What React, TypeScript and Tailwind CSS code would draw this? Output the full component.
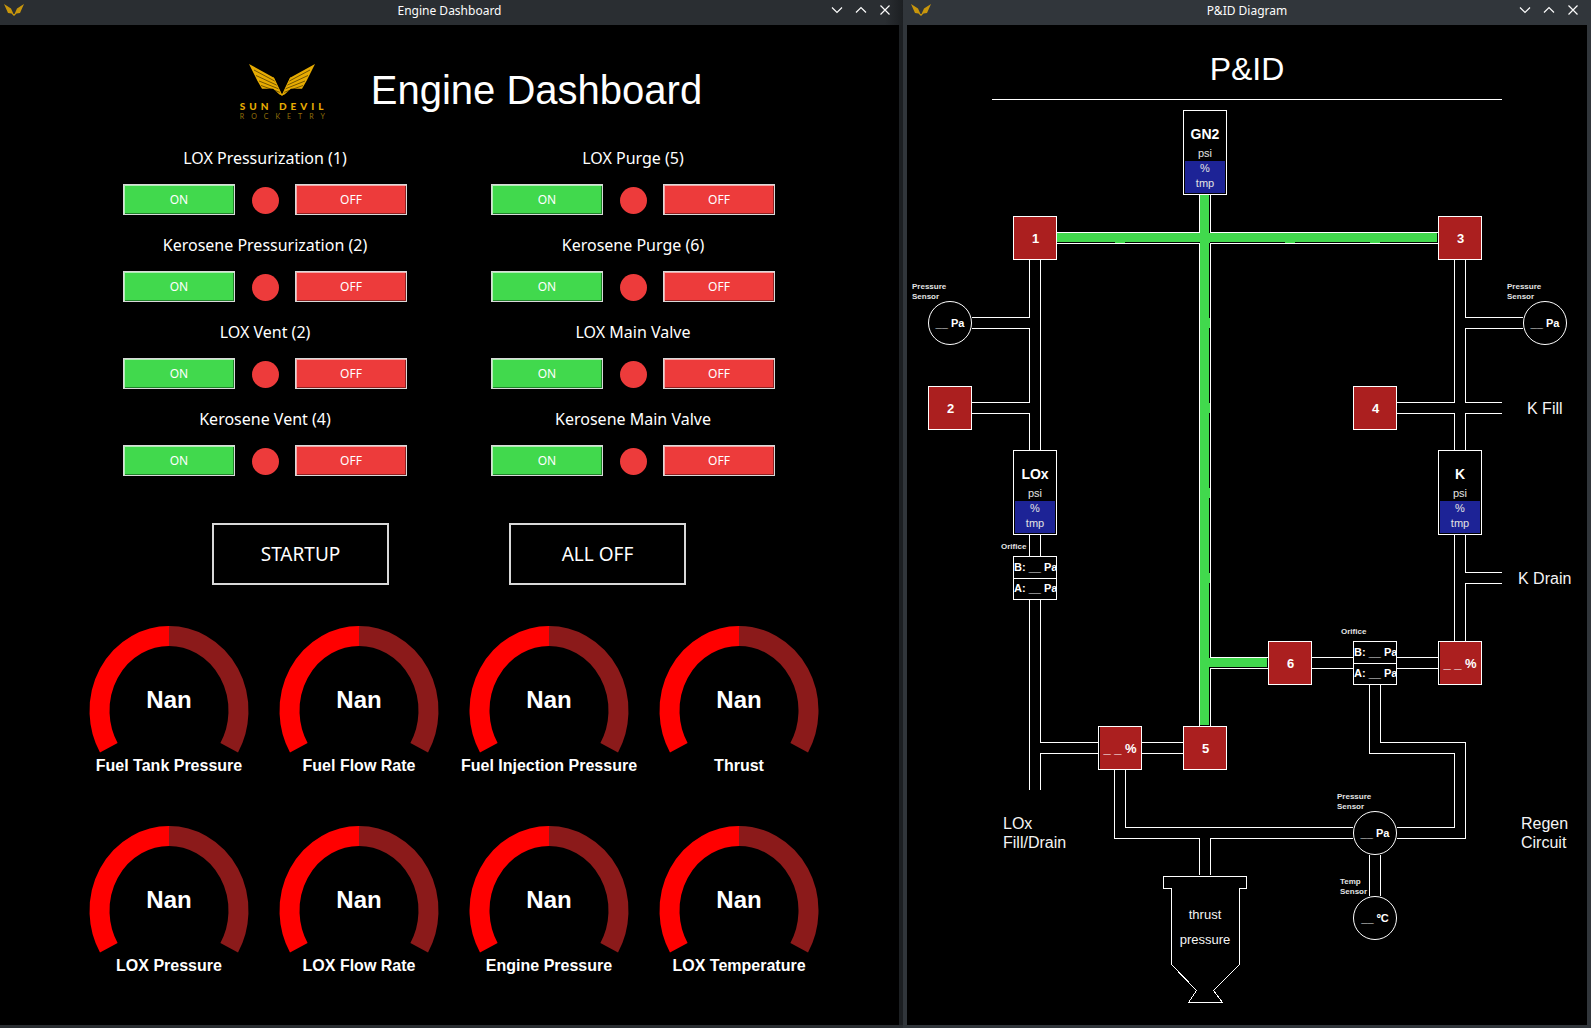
import { useId, type CSSProperties, type ReactNode } from "react";

/* ---------- Branding ---------- */

function Wing() {
  return (
    <>
      <path d="M0 0 L24.5 13.5 L33 31.5 L30.5 30.5 L24 24.8 L13 24.8 L8.5 17 Z" fill="currentColor" />
      <path
        d="M5 6 L27.5 18 M7 11.5 L28.5 21.5 M10 17 L30 25 M12 21.5 L31.5 28.5"
        stroke="#000"
        strokeWidth="0.5"
        fill="none"
      />
      <path d="M24.5 13.5 L33 31.5" stroke="currentColor" strokeWidth="1" />
    </>
  );
}

function Wings({ className }: { className: string }) {
  return (
    <svg viewBox="0 0 66 32" className={className} aria-hidden="true">
      <Wing />
      <g transform="translate(66 0) scale(-1 1)">
        <Wing />
      </g>
    </svg>
  );
}

function WingsMark() {
  return (
    <svg viewBox="0 0 20 12" className="ml-1 h-3 w-5 text-[#c8960c]" aria-hidden="true">
      <path d="M0 0 L7 4.5 L9.5 10 L10.5 10 L13 4.5 L20 0 L16 9 L12.5 9.5 L10 12 L7.5 9.5 L4 9 Z" fill="currentColor" />
    </svg>
  );
}

function Logo() {
  return (
    <div className="flex w-[86px] flex-col items-start font-['Lato',sans-serif]">
      <Wings className="ml-[9px] h-8 w-[66px] text-[#e6ab02]" />
      <div className="mt-1 h-3 w-full text-[10px] leading-3 font-black whitespace-nowrap text-[#e6ab02]">
        <span className="tracking-[4px]">SUN DEVIL</span>
      </div>
      <div className="h-2 w-full text-[7px] leading-2 whitespace-nowrap text-[#94700a]">
        <span className="tracking-[7px]">ROCKETRY</span>
      </div>
    </div>
  );
}

/* ---------- Window frame ---------- */

function TitleButton({ label, d }: { label: string; d: string }) {
  return (
    <button type="button" aria-label={label} className="flex h-5 w-6 items-center justify-center">
      <svg viewBox="0 0 12 12" className="size-3" fill="none" stroke="#fcfcfc" strokeWidth="1.2">
        <path d={d} />
      </svg>
    </button>
  );
}

function TitleBar({ title, className }: { title: string; className: string }) {
  return (
    <header className={`grid h-[25px] grid-cols-[1fr_auto_1fr] items-start ${className}`}>
      <div className="pt-1">
        <WingsMark />
      </div>
      <h2 className="text-xs leading-[22px] text-[#fcfcfc]">{title}</h2>
      <div className="mr-0.5 flex justify-end">
        <TitleButton label="Minimize" d="M1 3.5 L6 8.5 L11 3.5" />
        <TitleButton label="Maximize" d="M1 8.5 L6 3.5 L11 8.5" />
        <TitleButton label="Close" d="M1.5 1.5 L10.5 10.5 M10.5 1.5 L1.5 10.5" />
      </div>
    </header>
  );
}

/* ---------- Engine dashboard ---------- */

const controls = [
  "LOX Pressurization (1)",
  "LOX Purge (5)",
  "Kerosene Pressurization (2)",
  "Kerosene Purge (6)",
  "LOX Vent (2)",
  "LOX Main Valve",
  "Kerosene Vent (4)",
  "Kerosene Main Valve",
];

const gauges = [
  "Fuel Tank Pressure",
  "Fuel Flow Rate",
  "Fuel Injection Pressure",
  "Thrust",
  "LOX Pressure",
  "LOX Flow Rate",
  "Engine Pressure",
  "LOX Temperature",
];

function ValveControl({ name }: { name: string }) {
  const id = useId();
  return (
    <div role="group" aria-labelledby={id} className="flex flex-col gap-[14px]">
      <h3 id={id} className="text-center text-base leading-6">
        {name}
      </h3>
      <div className="flex items-center gap-4">
        <button
          type="button"
          className="h-[31px] w-28 border border-[#d9d9d9] bg-[#41d94d] text-xs shadow-[inset_1px_1px_0_#b0f0b5,inset_-1px_-1px_0_#20812a]"
        >
          ON
        </button>
        <span className="mt-0.5 ml-px size-[27px] rounded-full bg-[#ed3b3b]" />
        <button
          type="button"
          className="h-[31px] w-28 border border-[#d9d9d9] bg-[#ed3b3b] text-xs shadow-[inset_1px_1px_0_#f8a8a8,inset_-1px_-1px_0_#8e2020]"
        >
          OFF
        </button>
      </div>
    </div>
  );
}

function Gauge({ name }: { name: string }) {
  return (
    <figure className="relative flex flex-col items-center gap-[3px] font-['Liberation_Sans',sans-serif] font-bold">
      <svg viewBox="0 0 190 128" className="h-32 w-[190px]" fill="none" strokeWidth="20" aria-hidden="true">
        <path d="M34.8 122.7 A69.5 74.5 0 0 1 95 11" stroke="#ff0000" />
        <path d="M95 11 A69.5 74.5 0 0 1 155.2 122.7" stroke="#8b1a1a" />
      </svg>
      <span className="absolute inset-x-0 top-[59px] text-center text-2xl leading-8">Nan</span>
      <figcaption className="text-base leading-5 whitespace-nowrap">{name}</figcaption>
    </figure>
  );
}

function BigButton({ children }: { children: ReactNode }) {
  return (
    <button type="button" className="h-[62px] w-[177px] border-2 border-[#d9d9d9] text-[19px]">
      {children}
    </button>
  );
}

function EngineDashboard() {
  return (
    <section className="flex min-w-0 flex-1 flex-col bg-[#1c1f22]">
      <TitleBar title="Engine Dashboard" className="bg-linear-to-r from-[#2a2e32] from-98% to-[#1c1f22] pr-1" />
      <div className="mr-1 flex-1 bg-black pt-[39px]">
        <div className="flex items-start justify-center gap-[45px] pl-[43px]">
          <Logo />
          <h1 className="mt-1.5 font-['Liberation_Sans',sans-serif] text-[40px] leading-10">Engine Dashboard</h1>
        </div>
        <div className="mt-[26px] grid grid-cols-[284px_284px] justify-center gap-x-[84px] gap-y-[18px] pr-px">
          {controls.map((name) => (
            <ValveControl key={name} name={name} />
          ))}
        </div>
        <div className="mt-[47px] flex justify-center gap-[120px] pr-px">
          <BigButton>STARTUP</BigButton>
          <BigButton>ALL OFF</BigButton>
        </div>
        <div className="mt-10 grid grid-cols-[repeat(4,190px)] justify-center gap-y-[49px] pl-[9px]">
          {gauges.map((name) => (
            <Gauge key={name} name={name} />
          ))}
        </div>
      </div>
      <div className="h-[3px] bg-[#2a2e32]" />
    </section>
  );
}

/* ---------- P&ID diagram ---------- */

type NodeProps = { x: number; y: number };

// Nodes are placed by their centre on the canvas.
const at = (x: number, y: number): CSSProperties => ({ left: x, top: y });

function Valve({ x, y, label }: NodeProps & { label: string }) {
  return (
    <div
      style={at(x, y)}
      className="absolute flex size-11 -translate-1/2 items-center justify-center border border-white bg-[#ab1f1f] pt-0.5 pl-px text-[13px] font-bold"
    >
      {label}
    </div>
  );
}

function Throttle({ x, y }: NodeProps) {
  return (
    <div
      style={at(x, y)}
      className="absolute flex size-11 -translate-1/2 items-center justify-center border border-white bg-[#ab1f1f] pt-0.5 text-[13px] font-bold whitespace-nowrap shadow-[inset_1px_0_0_#000]"
    >
      _ _ %
    </div>
  );
}

function Sensor({ x, y, unit }: NodeProps & { unit: string }) {
  return (
    <div
      style={at(x, y)}
      className="absolute flex size-11 -translate-1/2 items-center justify-center rounded-full border border-white bg-black text-[11px] font-bold whitespace-nowrap"
    >
      __ {unit}
    </div>
  );
}

function Orifice({ x, y }: NodeProps) {
  return (
    <div
      style={at(x, y)}
      className="absolute size-11 -translate-1/2 divide-y divide-white overflow-hidden border border-white bg-black text-[11px] font-bold whitespace-nowrap"
    >
      <div className="h-[22px] leading-5">B: __ Pa</div>
      <div className="h-5 leading-[18px]">A: __ Pa</div>
    </div>
  );
}

function Tank({ x, y, label }: NodeProps & { label: string }) {
  return (
    <div
      style={at(x, y)}
      className="absolute w-11 -translate-x-1/2 border border-white bg-black pt-[15px] pb-px text-center text-[11px] leading-[15px] text-[#e4e4e4]"
    >
      <div className="mb-1 text-sm leading-4 font-bold text-white">{label}</div>
      <div>psi</div>
      <div className="mx-px h-8 bg-[#1d2396]">
        <div>%</div>
        <div>tmp</div>
      </div>
    </div>
  );
}

function Tag({ x, y, children }: NodeProps & { children: ReactNode }) {
  return (
    <div style={at(x, y)} className="absolute text-[8px] leading-[10px] font-bold whitespace-nowrap text-[#e4e4e4]">
      {children}
    </div>
  );
}

function Note({ x, y, children }: NodeProps & { children: ReactNode }) {
  return (
    <div style={at(x, y)} className="absolute text-base leading-[19px] whitespace-nowrap text-[#f4f4f4]">
      {children}
    </div>
  );
}

const pipes = [
  // GN2 manifold
  "M292.5 170V207.5H150M303.5 170V207.5H531M150 218.5H292.5V701M531 218.5H303.5V632.5H361M361 643.5H303.5V701",
  // LOx line
  "M122.5 235V292.5H65M65 303.5H122.5V377.5H65M65 388.5H122.5V425M133.5 235V425M122.5 510V531M133.5 510V531",
  "M122.5 575V765M133.5 575V717.5H191M191 728.5H133.5V765M235 717.5H276M235 728.5H276",
  // Kerosene line
  "M547.5 235V377.5H490M490 388.5H547.5V425M558.5 235V292.5H616M616 303.5H558.5V377.5H595M595 388.5H558.5V425",
  "M547.5 510V616M558.5 510V547.5H595M595 558.5H558.5V616M405 632.5H446M405 643.5H446M490 632.5H531M490 643.5H531",
  // Regen circuit and injector feed
  "M462.5 660V728.5H547.5V802.5H490M473.5 660V717.5H558.5V813.5H490M462.5 830V871M473.5 830V871",
  "M207.5 745V813.5H292.5V850M218.5 745V802.5H446M446 813.5H303.5V850",
  // Engine
  "M256.5 851.5H339.5V863.5H332.5V939.5L306.5 965.5L315.5 977.5H281.5L289.5 965.5L264.5 939.5V863.5H256.5Z",
];

const flow = [
  "M293 170H302V700H293Z",
  "M150 208H530V217H150Z",
  "M302 633H360V642H302Z",
  "M293 208H303V218H293Z",
  "M208 217H218V218H208ZM378 217H388V218H378ZM463 217H473V218H463Z",
  "M302 293H303V303H302ZM302 378H303V388H302ZM302 463H303V473H302ZM302 548H303V558H302Z",
];

function Diagram() {
  return (
    <div className="relative mx-auto h-[905px] w-[680px]">
      <svg viewBox="0 75 680 905" className="block h-[905px] w-[680px]" shapeRendering="crispEdges" aria-hidden="true">
        <path d={flow.join("")} fill="#41d94d" />
        <path d={pipes.join("")} fill="none" stroke="#fff" strokeWidth="1" />
      </svg>
      <Tank x={298} y={10} label="GN2" />
      <Tank x={128} y={350} label="LOx" />
      <Tank x={553} y={350} label="K" />
      <Valve x={128} y={138} label="1" />
      <Valve x={43} y={308} label="2" />
      <Valve x={553} y={138} label="3" />
      <Valve x={468} y={308} label="4" />
      <Valve x={298} y={648} label="5" />
      <Valve x={383} y={563} label="6" />
      <Throttle x={553} y={563} />
      <Throttle x={213} y={648} />
      <Orifice x={128} y={478} />
      <Orifice x={468} y={563} />
      <Sensor x={43} y={223} unit="Pa" />
      <Sensor x={638} y={223} unit="Pa" />
      <Sensor x={468} y={733} unit="Pa" />
      <Sensor x={468} y={818} unit="ºC" />
      <Tag x={5} y={182}>
        Pressure
        <br />
        Sensor
      </Tag>
      <Tag x={600} y={182}>
        Pressure
        <br />
        Sensor
      </Tag>
      <Tag x={430} y={692}>
        Pressure
        <br />
        Sensor
      </Tag>
      <Tag x={433} y={777}>
        Temp
        <br />
        Sensor
      </Tag>
      <Tag x={94} y={442}>Orifice</Tag>
      <Tag x={434} y={527}>Orifice</Tag>
      <Note x={620} y={299}>K Fill</Note>
      <Note x={611} y={469}>K Drain</Note>
      <Note x={96} y={714}>
        LOx
        <br />
        Fill/Drain
      </Note>
      <Note x={614} y={714}>
        Regen
        <br />
        Circuit
      </Note>
      <div
        style={at(298, 802)}
        className="absolute -translate-x-1/2 text-center text-[13px] leading-[25px] text-[#f4f4f4]"
      >
        thrust
        <br />
        pressure
      </div>
    </div>
  );
}

function PidWindow() {
  return (
    <section className="flex w-[688px] shrink-0 flex-col bg-[#31363b]">
      <TitleBar title="P&ID Diagram" className="px-1" />
      <div className="mx-1 mb-[3px] flex-1 bg-black pt-6 font-['Liberation_Sans',sans-serif]">
        <h1 className="text-center text-[32px] leading-10">P&amp;ID</h1>
        <hr className="mx-auto mt-[10px] w-3/4 border-t border-white" />
        <Diagram />
      </div>
    </section>
  );
}

export default function App() {
  return (
    <main className="flex min-h-screen bg-[#1c1f22] font-['Noto_Sans',sans-serif] text-white">
      <EngineDashboard />
      <PidWindow />
    </main>
  );
}
